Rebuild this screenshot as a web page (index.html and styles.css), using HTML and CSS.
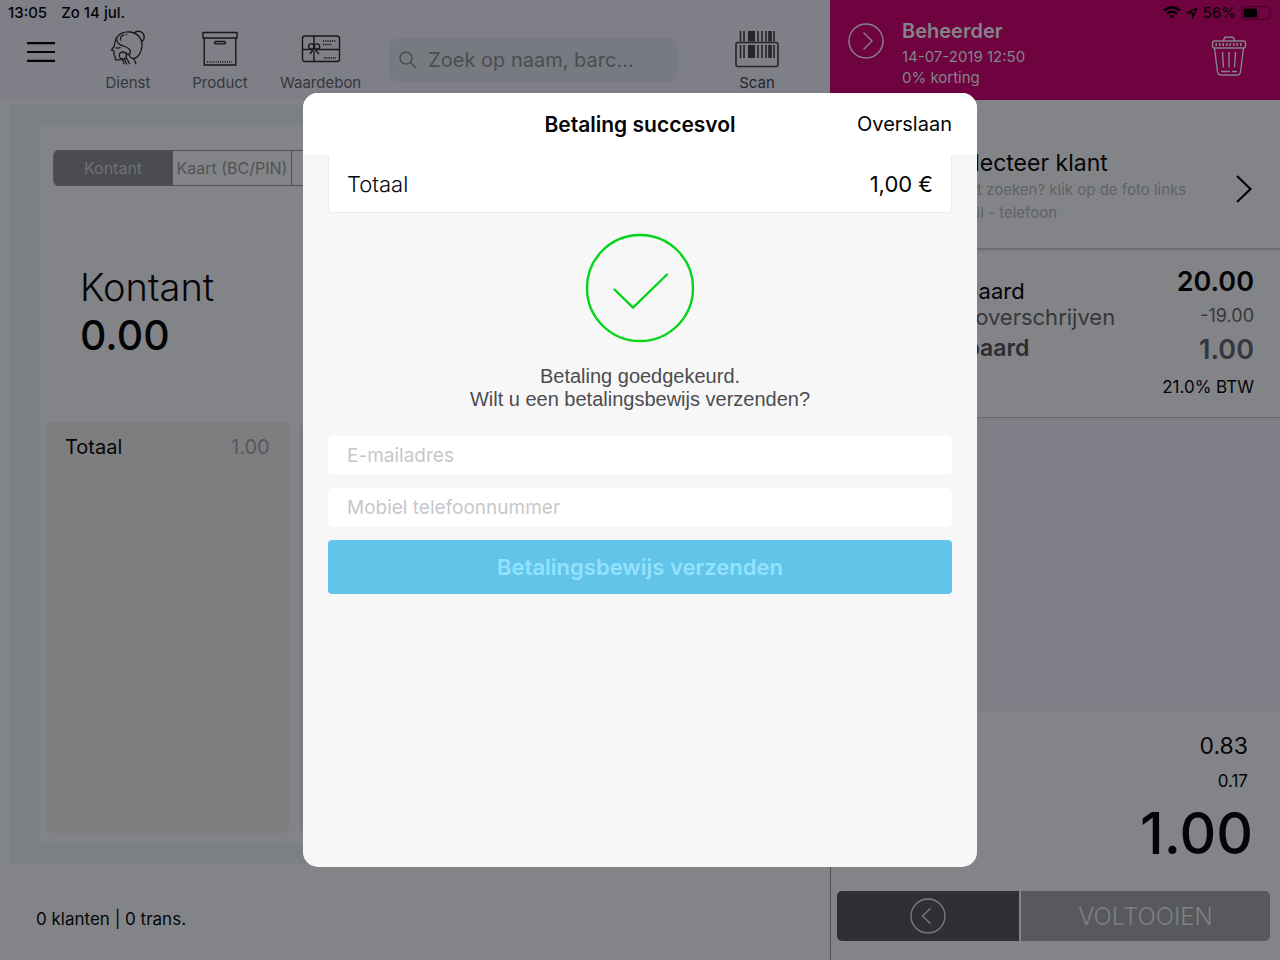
FILE: index.html
```html
<!DOCTYPE html>
<html lang="nl">
<head>
    <meta charset="UTF-8">
    <meta name="viewport" content="width=device-width, initial-scale=1.0">
    <title>Kassa - Betaling</title>
    <link rel="stylesheet" href="styles.css">
</head>
<body>

<div class="app">
    <main class="register">
        <header class="toolbar">
            <div class="status"><span>13:05</span><span>Zo 14 jul.</span></div>
            <nav class="tools">
                <button class="menu" aria-label="Menu">
                    <svg width="28" height="20" viewBox="0 0 28 20"><path d="M0 1.2h28M0 10h28M0 18.800h28" stroke="#050507" stroke-width="2.200"/></svg>
                </button>
                <button class="tool">
                    <svg width="36" height="36" viewBox="0 0 36 36" fill="none" stroke="#17181b" stroke-width="1.300" stroke-linecap="round" stroke-linejoin="round">
                        <path d="M6.500 8C9.500 3.500 15 1.500 20 2C28 3 32.500 9 32 16C31.500 23 27.500 28.500 23 28.700C20.500 28 19.500 26.500 19 24.700"/>
                        <path d="M24.500 3C26 .8 30 .6 32.500 2.800C35.500 6 34.500 10.500 31.500 11.300"/>
                        <path d="M6.500 8C4.500 11 5 15 4 16.500L1.500 20L4 21V25L5 26.500L5.500 29.800H10.500"/>
                        <path d="M6.500 8C6.500 13 9.500 15 13.500 16C18.500 17.500 21.500 20 20 23.200C18.500 25.500 16.500 24.500 16.500 23"/>
                        <path d="M10.500 10C10 7 12 5 14 4.800M16.500 4.300h.4M6 17.700Q8 18.800 10 17.500"/>
                        <circle cx="12.800" cy="25.500" r="3.500"/>
                        <path d="M12 29L14 33.500M14.500 29L16.500 34M16.500 28L19.500 33.500M24 29L26 34"/>
                    </svg>
                    <span>Dienst</span>
                </button>
                <button class="tool">
                    <svg width="36" height="36" viewBox="0 0 36 36" fill="none" stroke="#17181b" stroke-width="1.400">
                        <path d="M1 2.500H35V8H1zM2.200 8V35H33.800V8"/>
                        <rect x="12.500" y="11.500" width="11" height="2.400" rx="1.200"/>
                        <path d="M5 32H31" stroke-dasharray="1 1.200"/>
                    </svg>
                    <span>Product</span>
                </button>
                <button class="tool">
                    <svg width="40" height="36" viewBox="0 0 40 36" fill="none" stroke="#17181b" stroke-width="1.400">
                        <rect x="1.500" y="6" width="37" height="25.500" rx="2.500"/>
                        <path d="M13 6v8M13 21v10.500M1.500 19.500H11M15 19.500H38.500"/>
                        <circle cx="10.300" cy="16.600" r="2.700"/><circle cx="16" cy="16.600" r="2.700"/>
                        <path d="M12.500 19L9 24M13.500 19L18 24"/>
                        <path d="M22 11H35M22 14.500H31M23 28H35" stroke-dasharray="1.200 1"/>
                    </svg>
                    <span>Waardebon</span>
                </button>
                <label class="search">
                    <svg width="18" height="18" viewBox="0 0 18 18" fill="none" stroke="#4b4d52" stroke-width="1.500"><circle cx="7" cy="7" r="6"/><path d="M11.500 11.500L17 17"/></svg>
                    <input type="search" placeholder="Zoek op naam, barc..." aria-label="Zoeken">
                </label>
                <button class="tool scan">
                    <svg width="44" height="38" viewBox="0 0 44 38" fill="none" stroke="#25262a">
                        <rect x="1" y="12.500" width="42" height="24" rx="2" stroke-width="1.600"/>
                        <path d="M5.500 1V11.500M9 1V11.500M23 1V11.500M27 1V11.500M31 1V11.500M39 1V11.500M5.500 15V28M9 15V28M23 15V28M27 15V28M31 15V28M39 15V28" stroke-width="1.600"/>
                        <path d="M16.500 1V11.500M16.500 15V28" stroke-width="7"/>
                        <path d="M35 1V11.500M35 15V28" stroke-width="3.600"/>
                    </svg>
                    <span>Scan</span>
                </button>
            </nav>
        </header>

        <section class="workspace">
            <div class="payment">
                <div class="methods">
                    <button class="active">Kontant</button>
                    <button>Kaart (BC/PIN)</button>
                    <button></button>
                </div>
                <div class="amount">
                    <div class="amount-name">Kontant</div>
                    <div class="amount-value">0.00</div>
                </div>
                <div class="boxes">
                    <div class="box"><span>Totaal</span><span class="muted">1.00</span></div>
                    <div class="box"></div>
                    <div class="box"></div>
                </div>
            </div>
        </section>

        <footer class="summary"><div>0 klanten | 0 trans.</div></footer>
    </main>

    <aside class="ticket">
        <header class="ticket-head">
            <div class="device">
                <svg width="18" height="13" viewBox="0 0 18 13" fill="none" stroke="#000" stroke-width="2.300"><path d="M1 4.500Q9-2 17 4.500M4 7.700Q9 3.500 14 7.700"/><path d="M6.500 10Q9 8 11.500 10L9 12.500z" fill="#000" stroke="none"/></svg>
                <svg width="12" height="12" viewBox="0 0 12 12" fill="none" stroke="#000" stroke-width="1.300" stroke-linejoin="round"><path d="M1 5.800L11 1L6.500 11V5.800z"/></svg>
                <span>56%</span>
                <svg width="32" height="14" viewBox="0 0 32 14"><rect x=".6" y=".6" width="28" height="12.800" rx="3.500" fill="none" stroke="#3d0324"/><rect x="2.500" y="2.500" width="13.500" height="9" rx="1.500"/><path d="M30.500 5Q32.500 7 30.500 9z" fill="#3d0324"/></svg>
            </div>
            <div class="operator">
                <button aria-label="Volgende">
                    <svg width="36" height="36" viewBox="0 0 36 36" fill="none" stroke="#84848a" stroke-width="1.400"><circle cx="18" cy="18" r="17"/><path d="M15.500 9.500L24 18L15.500 26.500"/></svg>
                </button>
                <div class="operator-info">
                    <strong>Beheerder</strong>
                    <span>14-07-2019 12:50</span>
                    <span>0% korting</span>
                </div>
                <button class="trash" aria-label="Verwijderen">
                    <svg width="36" height="40" viewBox="0 0 36 40" fill="none" stroke="#84848a" stroke-width="1.400" stroke-linejoin="round">
                        <path d="M12 5L14 1.200H22L24 5"/><rect x="1.500" y="5" width="33" height="7" rx="2"/>
                        <path d="M4.500 8.500H32" stroke-width="3" stroke-dasharray="1.500 2"/>
                        <path d="M3.500 12L6.500 36Q7 39 9.500 39H26.500Q29 39 29.500 36L32.500 12M11.500 16L12.500 31.500M18 16V31.500M24.500 16L23.500 31.500M10 35.500H19M21 35.500H26"/>
                    </svg>
                </button>
            </div>
        </header>

        <button class="customer">
            <span class="customer-text">
                <span class="customer-name">Selecteer klant</span>
                <span>Klant zoeken? klik op de foto links</span>
                <span>Email - telefoon</span>
            </span>
            <svg width="18" height="30" viewBox="0 0 18 30" fill="none" stroke="#050507" stroke-width="2.200"><path d="M2 2L15.500 15L2 28"/></svg>
        </button>

        <div class="item">
            <div class="item-names">
                <span>Gespaard</span>
                <span class="dim">Prijs overschrijven</span>
                <strong>Bespaard</strong>
            </div>
            <div class="item-prices">
                <strong>20.00</strong>
                <span class="discount">-19.00</span>
                <strong class="dim">1.00</strong>
                <span class="vat">21.0% BTW</span>
            </div>
        </div>

        <div class="empty"></div>

        <div class="totals">
            <span class="net">0.83</span>
            <span class="tax">0.17</span>
            <span class="grand">1.00</span>
        </div>
        <div class="actions">
            <button class="back" aria-label="Terug">
                <svg width="36" height="36" viewBox="0 0 36 36" fill="none" stroke="#7d7d82" stroke-width="1.300"><circle cx="18" cy="18" r="17"/><path d="M20.500 10.500L12.500 18L20.500 25.500"/></svg>
            </button>
            <button class="finish">VOLTOOIEN</button>
        </div>
    </aside>
</div>

<div class="overlay">
    <div class="modal" role="dialog" aria-labelledby="modal-title">
        <div class="modal-head">
            <h2 id="modal-title">Betaling succesvol</h2>
            <button class="skip">Overslaan</button>
        </div>
        <div class="modal-body">
            <div class="total-card"><span class="total-label">Totaal</span><span>1,00 €</span></div>
            <svg class="check" width="110" height="110" viewBox="0 0 110 110" fill="none" stroke="#06d419" stroke-width="2.400" stroke-linecap="round"><circle cx="55" cy="55" r="53"/><path d="M29.500 56.500L48 74.500L82 41.500"/></svg>
            <p>Betaling goedgekeurd.<br>Wilt u een betalingsbewijs verzenden?</p>
            <form class="receipt">
                <input type="email" placeholder="E-mailadres" aria-label="E-mailadres">
                <input type="tel" placeholder="Mobiel telefoonnummer" aria-label="Mobiel telefoonnummer">
                <button type="button">Betalingsbewijs verzenden</button>
            </form>
        </div>
    </div>
</div>

</body>
</html>
```
FILE: styles.css
```css
* { box-sizing: border-box; }
body { margin: 0; font-family: Inter, "Liberation Sans", sans-serif; color: #050507; background: #838487; }
button { padding: 0; border: none; background: none; font: inherit; color: inherit; }
input { font: inherit; border: none; outline: none; min-width: 0; }
svg { display: block; flex: none; }

.app { display: flex; min-height: 100vh; }
.register { flex: 1; min-width: 0; display: flex; flex-direction: column; }

/* Toolbar */
.toolbar { height: 100px; background: #7f7f88; }
.status { display: flex; gap: 14px; padding: 3px 8px 0; height: 24px; font-size: 15px; line-height: 20px; font-weight: 500; }
.tools { display: flex; align-items: flex-start; gap: 28px; padding: 6px 41px 0 27px; }
.menu { margin: 12px 13px 0 0; }
.tool { min-width: 64px; display: flex; flex-direction: column; align-items: center; justify-content: space-between; height: 62px; font-size: 15px; line-height: 18px; color: #36373b; }
.scan { margin-left: 19px; color: #25262a; }
.search { flex: 1; min-width: 0; display: flex; align-items: center; gap: 9px; height: 44px; margin-top: 8px; padding: 0 10px; border-radius: 11px; background: #777a80; }
.search input { flex: 1; background: none; font-size: 20px; }
.search input::placeholder { color: #4b4d52; opacity: 1; }

/* Payment panel */
.workspace { flex: 1; display: flex; margin: 4px 10px 0; padding: 21px 20px 21px 30px; background: #7b8083; }
.payment { flex: 1; display: flex; flex-direction: column; padding: 25px 6px 10px; border-radius: 5px; background: #838487; }
.methods { display: flex; margin: 0 7px; height: 36px; border: 1px solid #505155; border-radius: 5px; overflow: hidden; font-size: 16px; color: #505155; }
.methods button { flex: 0 0 119px; border-right: 1px solid #505155; }
.methods button:last-child { flex: 1; border-right: none; }
.methods .active { background: #4b4c50; color: #707175; }
.amount { padding: 77px 34px 0; line-height: 48px; }
.amount-name { font-size: 38px; font-weight: 300; }
.amount-value { font-size: 41px; font-weight: 500; }
.boxes { flex: 1; display: grid; grid-template-columns: repeat(3, 1fr); gap: 10px; margin-top: 63px; }
.box { display: flex; justify-content: space-between; padding: 12px 19px; border-radius: 5px; background: #7d7e80; font-size: 20px; line-height: 26px; }
.muted { color: #56575c; }
.summary { padding: 16px 26px; font-size: 17px; }
.summary div { padding: 28px 10px; line-height: 22px; height: 64px; }

/* Ticket */
.ticket { width: 450px; display: flex; flex-direction: column; border-left: 1px solid #4f5054; }
.ticket-head { height: 100px; margin-left: -1px; background: #6f0340; color: #84848a; }
.device { display: flex; justify-content: flex-end; align-items: center; gap: 5px; height: 20px; padding: 5px 7px 0 0; font-size: 15px; line-height: 16px; color: #000; }
.operator { display: flex; padding: 0 33px 0 18px; }
.operator > button { align-self: flex-start; margin-top: 3px; }
.operator-info { flex: 1; display: flex; flex-direction: column; margin-left: 18px; font-size: 15px; line-height: 21px; }
.operator-info strong { font-size: 20px; font-weight: 600; line-height: 22px; margin-bottom: 4px; }
.operator .trash { margin-top: 16px; }
.customer { display: flex; justify-content: space-between; height: 149px; padding: 30px 27px 0 115px; text-align: left; align-items: flex-start; border-bottom: 1px solid #686a6d; box-shadow: 0 1px 3px rgba(0,0,0,0.2); }
.customer-text { display: flex; flex-direction: column; padding-top: 19px; font-size: 15px; line-height: 23px; color: #606266; }
.customer-name { margin-bottom: 1px; font-size: 23px; line-height: 28px; color: #050507; }
.customer svg { margin-top: 44px; }
.item { display: flex; justify-content: space-between; height: 169px; padding: 15px 26px 0 93px; border-bottom: 1px solid #67686b; }
.item-names { display: flex; flex-direction: column; padding-top: 14px; font-size: 22px; line-height: 26px; }
.item-names strong { margin-top: 5px; font-size: 23px; font-weight: 600; color: #2c2d30; }
.item .dim { color: #36373b; }
.item-prices { display: flex; flex-direction: column; align-items: flex-end; }
.item-prices strong { font-size: 27px; line-height: 36px; font-weight: 600; }
.item-prices .discount { font-size: 18px; line-height: 32px; color: #36373b; }
.vat { font-size: 17px; line-height: 38px; }
.empty { flex: 1; background: #7f7f88; }
.totals { display: flex; flex-direction: column; align-items: flex-end; height: 180px; padding: 19px 27px 0; }
.net { margin-right: 5px; font-size: 23px; line-height: 32px; }
.tax { margin-right: 5px; font-size: 17px; line-height: 39px; }
.grand { font-size: 57px; line-height: 66px; font-weight: 500; }
.actions { display: flex; gap: 2px; padding: 0 10px 19px 6px; }
.actions button { height: 50px; display: flex; align-items: center; justify-content: center; }
.back { flex: 182; border-radius: 5px 0 0 5px; background: #2f3034; }
.finish { flex: 249; border-radius: 0 5px 5px 0; background: #58595d; color: #7f7f84; font-size: 24px; font-weight: 300; }

/* Modal */
.overlay { position: fixed; inset: 0; display: flex; justify-content: center; padding: 93px 20px; }
.modal { width: 100%; max-width: 674px; display: flex; flex-direction: column; border-radius: 15px; background: #f7f7f7; overflow: hidden; }
.modal-head { display: grid; grid-template-columns: 1fr auto 1fr; align-items: center; height: 62px; padding: 0 25px; background: #fff; font-size: 20px; }
.modal-head h2 { grid-column: 2; margin: 0; font-size: 21px; font-weight: 600; }
.skip { justify-self: end; }
.modal-body { padding: 0 25px; }
.total-card { display: flex; justify-content: space-between; height: 58px; padding: 14px 18px; border: 1px solid #ececec; border-top: none; border-radius: 0 0 5px 5px; background: #fff; font-size: 22px; line-height: 30px; }
.total-label { font-weight: 300; }
.check { margin: 20px auto 0; }
.modal-body p { margin: 22px 0 25px; text-align: center; font-family: "Liberation Sans", sans-serif; font-size: 20px; line-height: 23px; color: #4b4c50; }
.receipt { display: flex; flex-direction: column; gap: 13px; }
.receipt input { height: 39px; padding: 0 19px; border-radius: 5px; background: #fff; font-size: 19px; }
.receipt input::placeholder { color: #c7c7cc; opacity: 1; }
.receipt button { height: 54px; border-radius: 4px; background: #62c4e9; color: #93e2fd; font-size: 22px; font-weight: 600; }
```
